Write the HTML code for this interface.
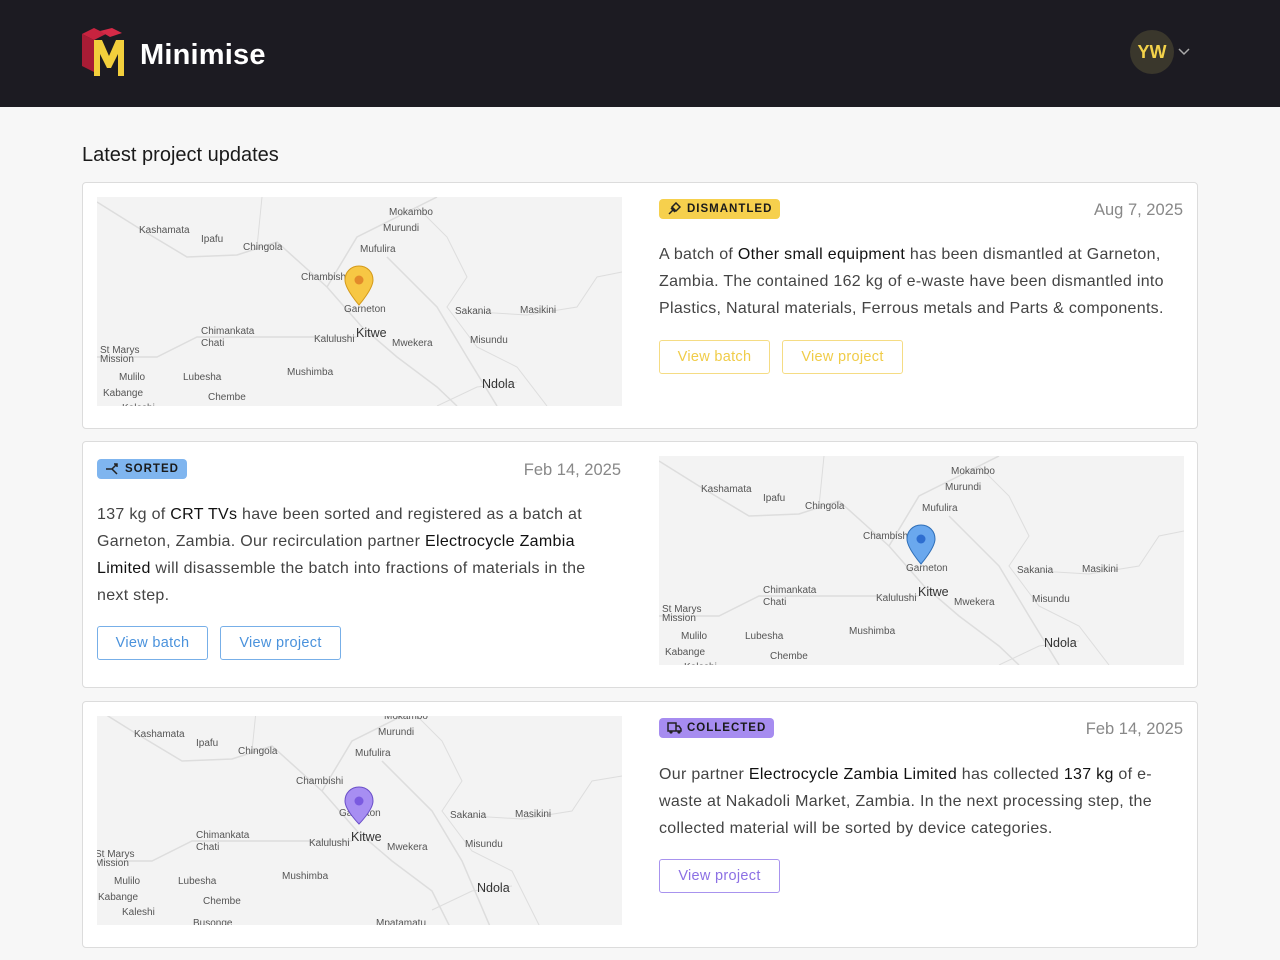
<!DOCTYPE html>
<html><head><meta charset="utf-8"><style>
*{box-sizing:border-box;margin:0;padding:0}
body{width:1280px;height:960px;overflow:hidden;background:#f7f7f7;font-family:"Liberation Sans",sans-serif;color:#333}
.hdr{height:107px;background:#1c1b22;position:relative}
.logo{position:absolute;left:82px;top:28px}
.brand{position:absolute;left:140px;top:39px;color:#fff;font-weight:bold;font-size:29px;letter-spacing:0.2px}
.av{position:absolute;left:1130px;top:30px;width:44px;height:44px;border-radius:50%;background:#3a372c;color:#f3d24a;font-weight:bold;font-size:18px;text-align:center;line-height:44px}
.chev{position:absolute;left:1178px;top:48px}
h1{position:absolute;left:82px;top:144px;font-size:20px;font-weight:normal;color:#1a1a1a}
.card{position:absolute;left:82px;width:1116px;height:247px;background:#fff;border:1px solid #dcdcdc;border-radius:4px}
.map{position:absolute;width:525px;height:209px;background:#f3f3f3;overflow:hidden}
.badge{position:absolute;height:20px;border-radius:4px;font-size:11.5px;font-weight:bold;letter-spacing:1px;line-height:20px;padding:0 8px 0 28px;color:#1a1a1a}
.badge svg{position:absolute;left:8px;top:3px}
.date{position:absolute;font-size:16.5px;color:#888;text-align:right;width:200px}
.txt{position:absolute;width:525px;font-size:16px;letter-spacing:0.3px;line-height:27px;color:#444}
.txt b{font-weight:normal;color:#111}
.btn{position:absolute;height:34px;border:1px solid;border-radius:3px;font-size:14.5px;letter-spacing:0.3px;line-height:32px;text-align:center;background:#fff}
.y{border-color:#f5dc84;color:#f0cc48}
.bl{border-color:#77afe8;color:#4a92dc}
.pu{border-color:#a893ee;color:#8c70e4}
.map text{font-family:"Liberation Sans",sans-serif;font-size:10px;fill:#555}
</style></head><body>
<div class="hdr">
<svg class="logo" width="44" height="50" viewBox="0 0 44 50">
<polygon points="0,6 12,0 24,6 12,12" fill="#c8233f"/>
<polygon points="0,6 12,12 12,44 0,38" fill="#a81c35"/>
<polygon points="18,3 30,0 40,5 28,9" fill="#d62a47"/>
<path d="M12,12 L20,12 L27,28 L34,12 L42,12 L42,48 L36,48 L36,26 L29,40 L25,40 L18,26 L18,48 L12,48 Z" fill="#f2cf3c"/>
</svg>
<div class="brand">Minimise</div>
<div class="av">YW</div>
<svg class="chev" width="12" height="8" viewBox="0 0 12 8"><path d="M1,1 L6,6 L11,1" fill="none" stroke="#aaa" stroke-width="1.5"/></svg>
</div>
<h1>Latest project updates</h1>

<!-- card 1 -->
<div class="card" style="top:182px">
<div class="map" style="left:14px;top:14px">
<svg width="525" height="209"><g>
<path d="M0,5 L40,30 L90,60 L140,58 L180,45 L230,90 L265,130 L300,160 L340,190 L360,209" fill="none" stroke="#ddd" stroke-width="1.5"/>
<path d="M230,90 L260,40 L300,20 L340,0" fill="none" stroke="#ddd" stroke-width="1.5"/>
<path d="M290,60 L340,110 L370,160 L400,209" fill="none" stroke="#ddd" stroke-width="1.5"/>
<path d="M320,10 L350,40 L370,80 L350,110 L380,150 L420,170 L450,209" fill="none" stroke="#ddd" stroke-width="1"/>
<path d="M0,160 L60,160 L100,140 L220,140 L260,140" fill="none" stroke="#ddd" stroke-width="1.5"/>
<path d="M380,115 L430,118 L480,110 L500,80 L525,75" fill="none" stroke="#ddd" stroke-width="1"/>
<path d="M165,0 L160,50" fill="none" stroke="#ddd" stroke-width="1"/>
<path d="M340,209 L380,190 L420,185" fill="none" stroke="#ddd" stroke-width="1"/>
<text x="42" y="36">Kashamata</text><text x="104" y="45">Ipafu</text><text x="146" y="53">Chingola</text>
<text x="292" y="18">Mokambo</text><text x="286" y="34">Murundi</text><text x="263" y="55">Mufulira</text>
<text x="204" y="83">Chambishi</text><text x="247" y="115">Garneton</text><text x="358" y="117">Sakania</text><text x="423" y="116">Masikini</text>
<text x="104" y="137">Chimankata</text><text x="104" y="149">Chati</text><text x="217" y="145">Kalulushi</text>
<text x="259" y="140" style="font-size:12.5px;fill:#333">Kitwe</text><text x="295" y="149">Mwekera</text><text x="373" y="146">Misundu</text>
<text x="3" y="156">St Marys</text><text x="3" y="165">Mission</text><text x="22" y="183">Mulilo</text><text x="86" y="183">Lubesha</text>
<text x="190" y="178">Mushimba</text><text x="6" y="199">Kabange</text><text x="111" y="203">Chembe</text>
<text x="385" y="191" style="font-size:12.5px;fill:#333">Ndola</text>
<text x="25" y="214">Kaleshi</text>
</g>
<path d="M262,69 C254,69 248,75 248,83 C248,92 262,108 262,108 C262,108 276,92 276,83 C276,75 270,69 262,69 Z" fill="#f7c744" stroke="#d49a1a"/>
<circle cx="262" cy="83" r="4.5" fill="#e38a2a"/>
</svg></div>
<div class="badge" style="left:576px;top:16px;background:#f6d04d"><svg width="14" height="14" viewBox="0 0 14 14"><path d="M2,12 L7,7 M5,5 L9,1 L13,5 L9,9 Z M4,6 L8,10" fill="none" stroke="#222" stroke-width="1.5"/></svg>DISMANTLED</div>
<div class="date" style="left:900px;top:18px">Aug 7, 2025</div>
<div class="txt" style="left:576px;top:58px">A batch of <b>Other small equipment</b> has been dismantled at Garneton, Zambia. The contained 162 kg of e-waste have been dismantled into Plastics, Natural materials, Ferrous metals and Parts &amp; components.</div>
<div class="btn y" style="left:576px;top:157px;width:111px">View batch</div>
<div class="btn y" style="left:699px;top:157px;width:121px">View project</div>
</div>

<!-- card 2 -->
<div class="card" style="top:441px">
<div class="badge" style="left:14px;top:17px;background:#7fb5ef"><svg width="14" height="14" viewBox="0 0 14 14"><path d="M1,7 L7,7 M12,2 L7,7 L12,12 M9,2 L12,2 L12,5" fill="none" stroke="#222" stroke-width="1.5"/></svg>SORTED</div>
<div class="date" style="left:338px;top:19px">Feb 14, 2025</div>
<div class="txt" style="left:14px;top:59px;width:510px">137 kg of <b>CRT TVs</b> have been sorted and registered as a batch at Garneton, Zambia. Our recirculation partner <b>Electrocycle Zambia Limited</b> will disassemble the batch into fractions of materials in the next step.</div>
<div class="btn bl" style="left:14px;top:184px;width:111px">View batch</div>
<div class="btn bl" style="left:137px;top:184px;width:121px">View project</div>
<div class="map" style="left:576px;top:14px">
<svg width="525" height="209"><g>
<path d="M0,5 L40,30 L90,60 L140,58 L180,45 L230,90 L265,130 L300,160 L340,190 L360,209" fill="none" stroke="#ddd" stroke-width="1.5"/>
<path d="M230,90 L260,40 L300,20 L340,0" fill="none" stroke="#ddd" stroke-width="1.5"/>
<path d="M290,60 L340,110 L370,160 L400,209" fill="none" stroke="#ddd" stroke-width="1.5"/>
<path d="M320,10 L350,40 L370,80 L350,110 L380,150 L420,170 L450,209" fill="none" stroke="#ddd" stroke-width="1"/>
<path d="M0,160 L60,160 L100,140 L220,140 L260,140" fill="none" stroke="#ddd" stroke-width="1.5"/>
<path d="M380,115 L430,118 L480,110 L500,80 L525,75" fill="none" stroke="#ddd" stroke-width="1"/>
<path d="M165,0 L160,50" fill="none" stroke="#ddd" stroke-width="1"/>
<path d="M340,209 L380,190 L420,185" fill="none" stroke="#ddd" stroke-width="1"/>
<text x="42" y="36">Kashamata</text><text x="104" y="45">Ipafu</text><text x="146" y="53">Chingola</text>
<text x="292" y="18">Mokambo</text><text x="286" y="34">Murundi</text><text x="263" y="55">Mufulira</text>
<text x="204" y="83">Chambishi</text><text x="247" y="115">Garneton</text><text x="358" y="117">Sakania</text><text x="423" y="116">Masikini</text>
<text x="104" y="137">Chimankata</text><text x="104" y="149">Chati</text><text x="217" y="145">Kalulushi</text>
<text x="259" y="140" style="font-size:12.5px;fill:#333">Kitwe</text><text x="295" y="149">Mwekera</text><text x="373" y="146">Misundu</text>
<text x="3" y="156">St Marys</text><text x="3" y="165">Mission</text><text x="22" y="183">Mulilo</text><text x="86" y="183">Lubesha</text>
<text x="190" y="178">Mushimba</text><text x="6" y="199">Kabange</text><text x="111" y="203">Chembe</text>
<text x="385" y="191" style="font-size:12.5px;fill:#333">Ndola</text>
<text x="25" y="214">Kaleshi</text>
</g>
<path d="M262,69 C254,69 248,75 248,83 C248,92 262,108 262,108 C262,108 276,92 276,83 C276,75 270,69 262,69 Z" fill="#6aa8ee" stroke="#2f6fb8"/>
<circle cx="262" cy="83" r="4.5" fill="#2e6ed0"/>
</svg></div>
</div>

<!-- card 3 -->
<div class="card" style="top:701px">
<div class="map" style="left:14px;top:14px">
<svg width="525" height="209"><g transform="translate(-5,-15)">
<path d="M0,5 L40,30 L90,60 L140,58 L180,45 L230,90 L265,130 L300,160 L340,190 L360,230" fill="none" stroke="#ddd" stroke-width="1.5"/>
<path d="M230,90 L260,40 L300,20 L340,0" fill="none" stroke="#ddd" stroke-width="1.5"/>
<path d="M290,60 L340,110 L370,160 L400,230" fill="none" stroke="#ddd" stroke-width="1.5"/>
<path d="M320,10 L350,40 L370,80 L350,110 L380,150 L420,170 L450,230" fill="none" stroke="#ddd" stroke-width="1"/>
<path d="M0,160 L60,160 L100,140 L220,140 L260,140" fill="none" stroke="#ddd" stroke-width="1.5"/>
<path d="M380,115 L430,118 L480,110 L500,80 L530,75" fill="none" stroke="#ddd" stroke-width="1"/>
<path d="M165,0 L160,50" fill="none" stroke="#ddd" stroke-width="1"/>
<path d="M340,209 L380,190 L420,185" fill="none" stroke="#ddd" stroke-width="1"/>
<text x="42" y="36">Kashamata</text><text x="104" y="45">Ipafu</text><text x="146" y="53">Chingola</text>
<text x="292" y="18">Mokambo</text><text x="286" y="34">Murundi</text><text x="263" y="55">Mufulira</text>
<text x="204" y="83">Chambishi</text><text x="247" y="115">Garneton</text><text x="358" y="117">Sakania</text><text x="423" y="116">Masikini</text>
<text x="104" y="137">Chimankata</text><text x="104" y="149">Chati</text><text x="217" y="145">Kalulushi</text>
<text x="259" y="140" style="font-size:12.5px;fill:#333">Kitwe</text><text x="295" y="149">Mwekera</text><text x="373" y="146">Misundu</text>
<text x="3" y="156">St Marys</text><text x="3" y="165">Mission</text><text x="22" y="183">Mulilo</text><text x="86" y="183">Lubesha</text>
<text x="190" y="178">Mushimba</text><text x="6" y="199">Kabange</text><text x="111" y="203">Chembe</text>
<text x="385" y="191" style="font-size:12.5px;fill:#333">Ndola</text>
<text x="30" y="214">Kaleshi</text><text x="101" y="225">Busonge</text><text x="284" y="225">Mpatamatu</text>
</g>
<path d="M262,71 C254,71 248,77 248,85 C248,94 262,108 262,108 C262,108 276,94 276,85 C276,77 270,71 262,71 Z" fill="#a78ef2" stroke="#6a4fc8"/>
<circle cx="262" cy="85" r="4.5" fill="#7a5ae0"/>
</svg></div>
<div class="badge" style="left:576px;top:16px;background:#a68cf0"><svg width="16" height="14" viewBox="0 0 16 14"><path d="M1,2 L9,2 L9,10 L1,10 Z M9,5 L12,5 L14,8 L14,10 L9,10" fill="none" stroke="#222" stroke-width="1.5"/><circle cx="4" cy="11" r="1.6" fill="#222"/><circle cx="12" cy="11" r="1.6" fill="#222"/></svg>COLLECTED</div>
<div class="date" style="left:900px;top:18px">Feb 14, 2025</div>
<div class="txt" style="left:576px;top:59px;width:515px">Our partner <b>Electrocycle Zambia Limited</b> has collected <b>137 kg</b> of e-&#8203;waste at Nakadoli Market, Zambia. In the next processing step, the collected material will be sorted by device categories.</div>
<div class="btn pu" style="left:576px;top:157px;width:121px">View project</div>
</div>
</body></html>
